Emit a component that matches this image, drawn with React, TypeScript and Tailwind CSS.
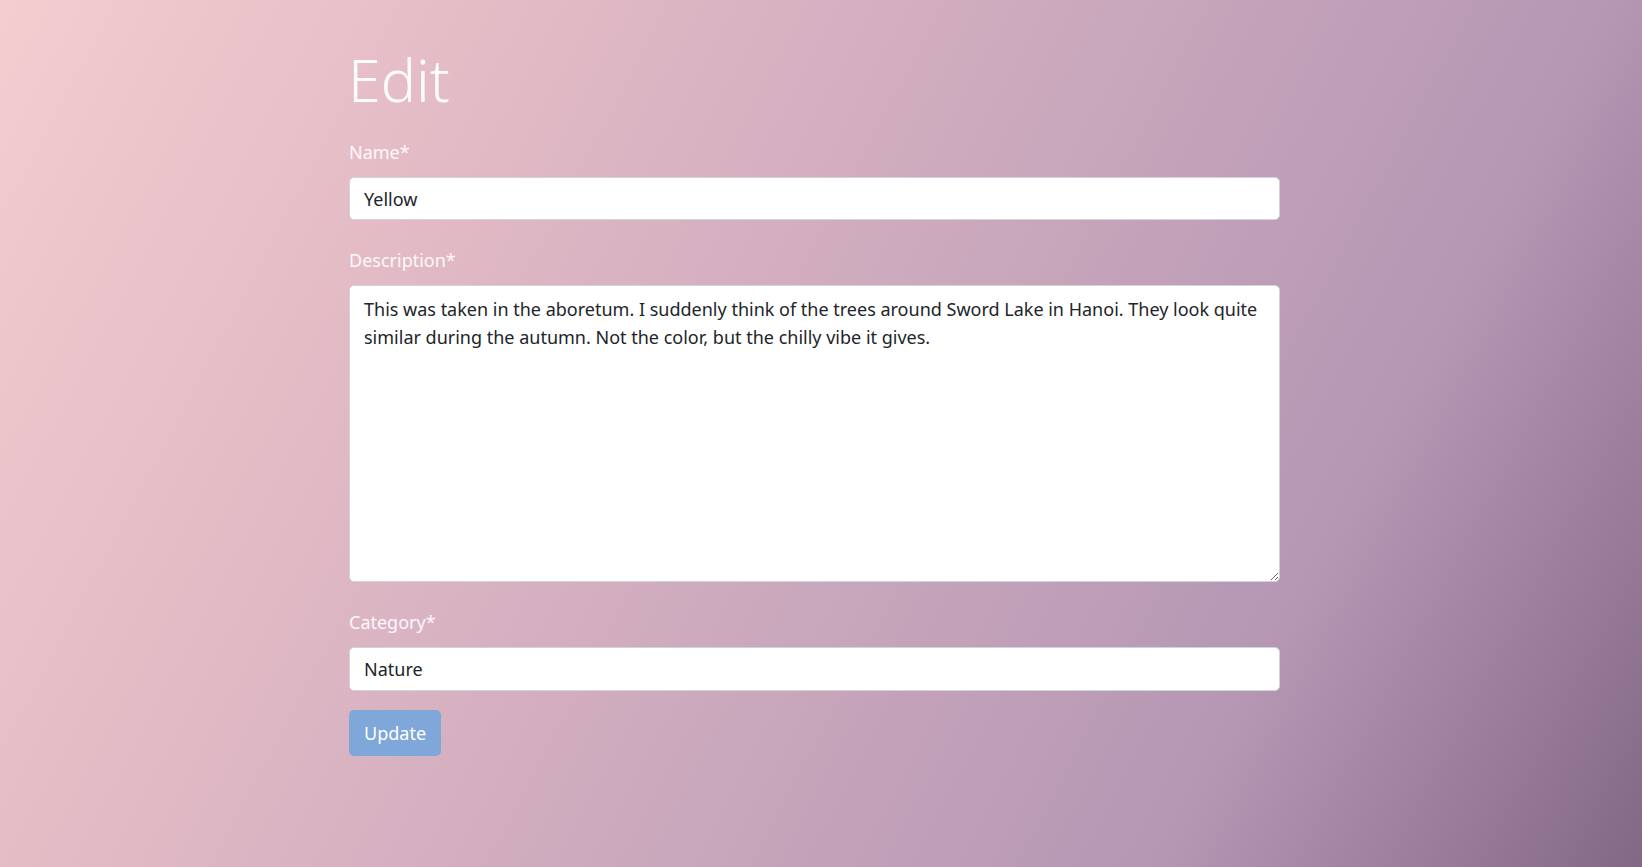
import React from "react";

const Field = ({ label, children }: { label: string; children: React.ReactNode }) => (
	<div className="flex flex-col">
		<label className="block text-[18px] leading-[27px] text-white/90 mb-[11px]">{label}</label>
		{children}
	</div>
);

const inputCls =
	"block w-full h-[43px] px-[14px] bg-white border border-[#ced4da] rounded-[5px] text-[18px] text-[#212529] outline-none";

export default function App() {
	const [name, setName] = React.useState("Yellow");
	const [description, setDescription] = React.useState(
		"This was taken in the aboretum. I suddenly think of the trees around Sword Lake in Hanoi. They look quite similar during the autumn. Not the color, but the chilly vibe it gives."
	);
	const [category, setCategory] = React.useState("Nature");

	return (
		<div className="min-h-screen w-full bg-[linear-gradient(118deg,#f3cdd0_0%,#e4bcc6_23%,#b597b4_77%,#836886_100%)] font-['Noto_Sans','Open_Sans',sans-serif] pt-[43px] pl-[349px]">
			<div className="w-[931px]">
				<h1 className="text-[59px] leading-[72px] font-light text-white/95 -ml-[1px]">Edit</h1>
				<form className="mt-[24px] flex flex-col gap-[27px]" onSubmit={(e) => e.preventDefault()}>
					<Field label="Name*">
						<input className={inputCls} value={name} onChange={(e) => setName(e.target.value)} />
					</Field>
					<Field label="Description*">
						<textarea
							className="block w-full h-[297px] px-[14px] pt-[9px] pb-[7px] bg-white border border-[#ced4da] rounded-[5px] text-[18px] leading-[28px] text-[#212529] outline-none"
							value={description}
							onChange={(e) => setDescription(e.target.value)}
						/>
					</Field>
					<Field label="Category*">
						<input className={inputCls + " h-[44px]"} value={category} onChange={(e) => setCategory(e.target.value)} />
					</Field>
					<div className="-mt-[8px]">
						<button
							type="submit"
							className="h-[46px] px-[15px] rounded-[5px] bg-[#7fa7d9] text-white text-[18px]"
						>
							Update
						</button>
					</div>
				</form>
			</div>
		</div>
	);
}
